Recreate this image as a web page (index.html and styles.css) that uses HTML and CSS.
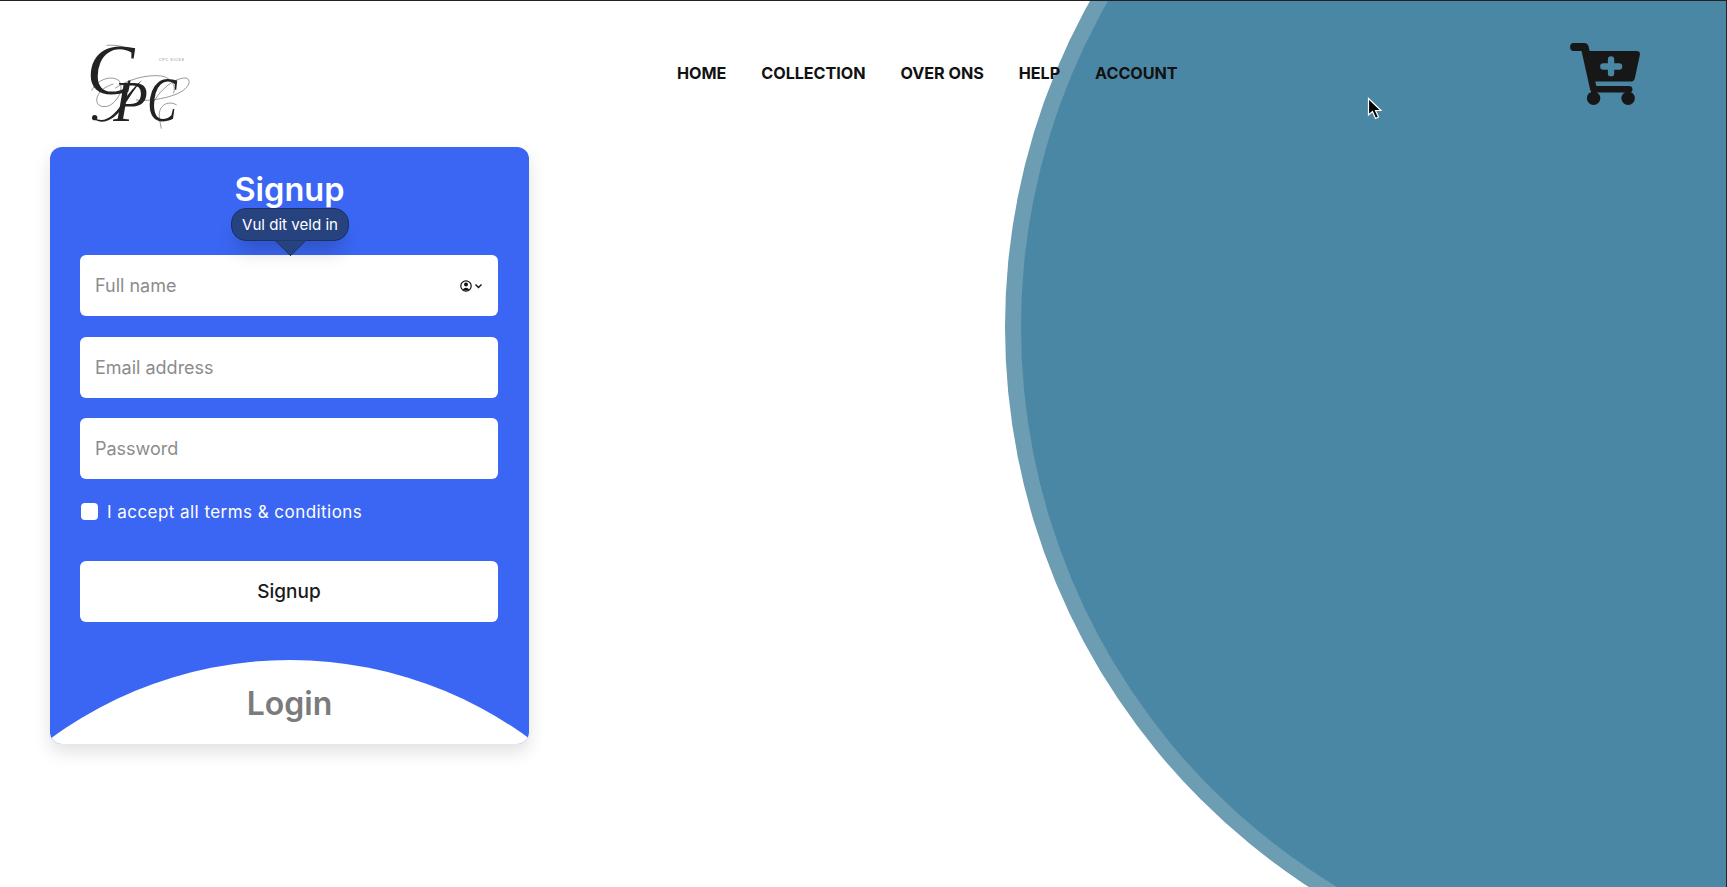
FILE: index.html
```html
<!DOCTYPE html>
<html lang="en">

<head>
    <meta charset="UTF-8">
    <meta name="viewport" content="width=device-width, initial-scale=1.0">
    <title>CPC Kicks - Signup</title>
    <link rel="stylesheet" href="styles.css">
</head>

<body>
    <div class="page">
        <div class="circle"></div>

        <header>
            <a href="#" class="logo">
                <svg width="110" height="92" viewBox="84 132 330 276" aria-label="CPC Kicks">
                    <text x="80" y="281" class="logo-letter logo-first">C</text>
                    <text x="160" y="362" class="logo-letter logo-second">P</text>
                    <text x="262" y="362" class="logo-letter logo-third">C</text>
                    <text x="297" y="184" class="logo-small">CPC KICKS</text>
                    <path class="logo-line" d="M140 136 C170 134 200 140 215 152" />
                    <path class="logo-line" d="M95 272 C110 240 150 225 175 240 C195 262 175 305 145 318 C118 325 105 310 112 290 C120 270 140 258 160 252" />
                    <path class="logo-line" d="M165 265 C200 240 260 222 305 228 C335 234 350 260 340 280" />
                    <path class="logo-line" d="M270 332 C285 280 340 232 378 234 C398 240 385 268 350 282 C310 298 260 304 228 300" />
                    <path class="logo-line" d="M350 315 C325 300 295 315 298 350 C299 365 302 375 304 386" />
                    <path class="logo-stem" d="M103 354 C135 372 165 345 190 305 C205 280 225 258 246 240 C225 265 210 290 195 312 C170 355 130 378 103 358 Z" />
                    <circle class="logo-dot" cx="104" cy="353" r="8" />
                </svg>
            </a>

            <nav>
                <a href="#">HOME</a>
                <a href="#">COLLECTION</a>
                <a href="#">OVER ONS</a>
                <a href="#">HELP</a>
                <a href="#">ACCOUNT</a>
            </nav>

            <a href="#" class="cart">
                <svg width="70" height="62" viewBox="0 0 208 185" aria-label="Cart">
                    <path class="cart-body"
                        d="M10 0 H42 Q52 0 55 10 L58 24 H198 Q210 24 208 36 L193 105 Q191 115 180 115 H75 L78 128 H175 Q186 128 186 138 Q186 148 175 148 H70 Q62 148 60 140 L34 24 H10 Q0 24 0 12 Q0 0 10 0 Z" />
                    <circle class="cart-body" cx="70" cy="165" r="20" />
                    <circle class="cart-body" cx="173" cy="165" r="20" />
                    <path class="cart-plus" d="M99 70 H146 M122 49 V90" />
                </svg>
            </a>
        </header>

        <main class="card">
            <h1>Signup</h1>

            <form class="signup-form">
                <div class="field">
                    <input type="text" placeholder="Full name">
                    <span class="autofill">
                        <svg width="22" height="12" viewBox="0 0 22 12">
                            <circle cx="6" cy="6" r="5.2" fill="none" stroke="#111" stroke-width="1.2" />
                            <circle cx="6" cy="4.6" r="2" fill="#111" />
                            <path d="M2.6 9.4 Q6 6 9.4 9.4 Q6 11.6 2.6 9.4 Z" fill="#111" />
                            <path d="M15.5 4.5 L18.5 7.5 L21.5 4.5" fill="none" stroke="#111" stroke-width="1.4" />
                        </svg>
                    </span>
                    <div class="tooltip">Vul dit veld in</div>
                </div>

                <div class="field">
                    <input type="email" placeholder="Email address">
                </div>

                <div class="field">
                    <input type="password" placeholder="Password">
                </div>

                <label class="terms">
                    <input type="checkbox">
                    I accept all terms &amp; conditions
                </label>

                <button type="button" class="signup-btn">Signup</button>
            </form>

            <div class="login">
                <span>Login</span>
            </div>
        </main>

        <svg class="pointer" width="16" height="24" viewBox="0 0 16 24">
            <path d="M1.5 1.5 V18 L5.5 14.5 L8.5 21.5 L11.5 20 L8.5 13.5 H14 Z" fill="#000" stroke="#fff" stroke-width="1.2" />
        </svg>
    </div>
</body>

</html>
```

FILE: styles.css
```css
* {
    box-sizing: border-box;
}

html,
body {
    height: 100%;
}

body {
    margin: 0;
    background-color: #fff;
    font-family: Inter, "Open Sans", sans-serif;
    color: #111;
}

.page {
    position: relative;
    height: 100%;
    overflow: hidden;
    border-top: 1px solid #222;
    border-right: 1px solid #223;
}

/* big circle behind the header */
.circle {
    position: absolute;
    left: 1005px;
    top: -342px;
    width: 1336px;
    height: 1336px;
    border-radius: 50%;
    background-color: #6c9db2;
}

.circle::before {
    content: "";
    position: absolute;
    left: 16px;
    top: 14px;
    width: 1308px;
    height: 1308px;
    border-radius: 50%;
    background-color: #4a87a4;
}

header {
    position: relative;
    display: flex;
    align-items: flex-start;
    height: 146px;
    padding: 42px 86px 0 88px;
}

.logo {
    display: block;
    width: 110px;
    margin-top: 1px;
}

.logo svg {
    display: block;
    overflow: visible;
}

.logo-letter {
    font-family: "Liberation Serif", serif;
    font-style: italic;
    fill: #222;
}

.logo-first {
    font-size: 215px;
}

.logo-second {
    font-size: 170px;
}

.logo-third {
    font-size: 190px;
    transform-box: fill-box;
    transform-origin: left bottom;
    transform: scaleX(0.7);
}

.logo-small {
    font-family: "Liberation Sans", sans-serif;
    font-size: 11px;
    letter-spacing: 2px;
    fill: #888;
}

.logo-line {
    fill: none;
    stroke: #333;
    stroke-width: 1.5;
}

.logo-stem,
.logo-dot {
    fill: #222;
}

nav {
    display: flex;
    gap: 35px;
    margin-left: 479px;
    margin-top: 19px;
}

nav a {
    font-size: 16.2px;
    line-height: 22px;
    font-weight: 700;
    letter-spacing: -0.05px;
    color: #111;
    text-decoration: none;
}

.cart {
    display: block;
    margin-left: auto;
}

.cart svg {
    display: block;
}

.cart-body {
    fill: #171717;
}

.cart-plus {
    fill: none;
    stroke: #4a87a4;
    stroke-width: 19;
    stroke-linecap: round;
}

.card {
    position: relative;
    display: flex;
    flex-direction: column;
    width: 479px;
    height: 597px;
    margin-left: 50px;
    padding-top: 21px;
    background-color: #3a66f3;
    border-radius: 12px;
    overflow: hidden;
    box-shadow: 0 8px 18px rgba(0, 0, 0, 0.12);
}

h1 {
    margin: 0;
    font-size: 32.5px;
    line-height: 44px;
    font-weight: 600;
    text-align: center;
    color: #fff;
}

.signup-form {
    display: flex;
    flex-direction: column;
    gap: 20.5px;
    margin-top: 43px;
    padding: 0 31px 0 30px;
}

.field {
    position: relative;
}

.field input {
    display: block;
    width: 100%;
    height: 61px;
    padding: 0 15px;
    border: none;
    border-radius: 6px;
    background-color: #fff;
    font-family: inherit;
    font-size: 18px;
    outline: none;
}

.field input::placeholder {
    color: #8c8c8c;
}

.autofill {
    position: absolute;
    right: 16px;
    top: 25px;
    line-height: 0;
}

.tooltip {
    position: absolute;
    left: 151px;
    top: -47px;
    width: 118px;
    height: 33px;
    border: 1px solid #1a2f63;
    border-radius: 15px;
    background-color: #26437f;
    color: #fff;
    font-size: 15.1px;
    line-height: 31px;
    text-align: center;
    box-shadow: 0 14px 20px -6px rgba(0, 0, 0, 0.22);
}

.tooltip::after {
    content: "";
    position: absolute;
    left: 47px;
    bottom: -12px;
    width: 22px;
    height: 22px;
    background-color: #26437f;
    border-right: 1px solid #1a2f63;
    border-bottom: 1px solid #1a2f63;
    transform: rotate(45deg);
    border-bottom-right-radius: 3px;
    clip-path: polygon(100% 0, 100% 100%, 0 100%);
}

.terms {
    display: flex;
    align-items: center;
    gap: 9px;
    height: 24px;
    margin-top: 0;
    color: #fff;
    font-size: 17px;
    letter-spacing: 0.45px;
}

.terms input {
    appearance: none;
    width: 17px;
    height: 17px;
    margin: 0 0 0 1px;
    border-radius: 4px;
    background-color: #fff;
}

.signup-btn {
    height: 61px;
    margin-top: 16.5px;
    border: none;
    border-radius: 6px;
    background-color: #fff;
    color: #1a1a1a;
    font-family: inherit;
    font-size: 19px;
    font-weight: 500;
    cursor: pointer;
}

.login {
    position: relative;
    height: 84px;
    margin-top: auto;
    display: flex;
    justify-content: center;
    padding-top: 22px;
}

.login::before {
    content: "";
    position: absolute;
    top: 0;
    left: 50%;
    width: 808px;
    height: 808px;
    margin-left: -404px;
    border-radius: 50%;
    background-color: #fff;
}

.login span {
    position: relative;
    font-size: 32px;
    line-height: 44px;
    font-weight: 600;
    color: #7b7b7b;
}

/* screen recording cursor */
.pointer {
    position: absolute;
    left: 1367px;
    top: 96px;
}
```
